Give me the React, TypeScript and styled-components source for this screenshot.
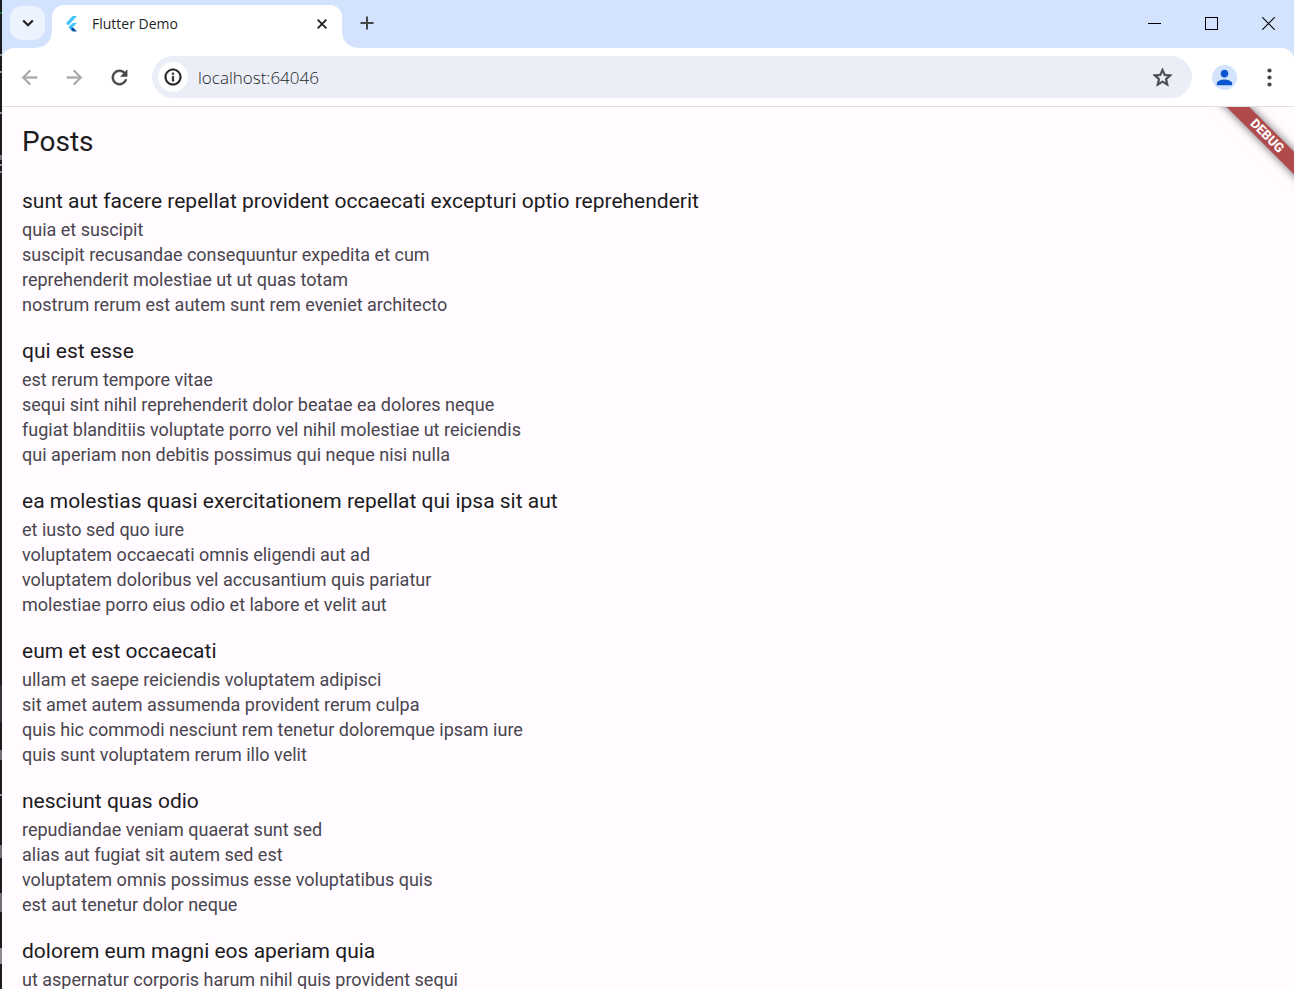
import React from "react";
import styled, { createGlobalStyle } from "styled-components";

const GlobalStyle = createGlobalStyle`
  *, *::before, *::after { box-sizing: border-box; }
  html, body, #root { height: 100%; margin: 0; }
  body { overflow: hidden; background: #1b1c1e; }
  button, input { font: inherit; color: inherit; border: 0; padding: 0; margin: 0; background: none; }
  h1, h2, p { margin: 0; font-weight: 400; }
`;

const uiFont = `"Open Sans", "Noto Sans", sans-serif`;

const Desktop = styled.div`
  height: 100%;
  display: flex;
  background: #1b1c1e;
`;

const EditorEdge = styled.div`
  flex: 0 0 2px;
  background: linear-gradient(
    #1b1c1e 12px, #1f6b35 12px 14px, #1b1c1e 14px 54px, #8a8c90 54px 56px, #1b1c1e 56px 71px,
    #8a8c90 71px 73px, #1b1c1e 73px 112px, #8a8c90 112px 114px, #1b1c1e 114px 155px,
    #6d6f73 155px 160px, #1b1c1e 160px 164px, #8a8c90 164px 166px, #1b1c1e 166px 171px,
    #8a8c90 171px 173px, #1b1c1e 173px 685px, #34353c 685px 722px, #1b1c1e 722px 750px,
    #6d6f73 750px 760px, #1b1c1e 760px 794px, #8a8c90 794px 796px, #1b1c1e 796px 845px,
    #6d6f73 845px 858px, #1b1c1e 858px 893px, #6d6f73 893px 912px, #1b1c1e 912px 948px,
    #8a8c90 948px 964px, #1b1c1e 964px
  );
`;

const BrowserWindow = styled.div`
  flex: 1;
  min-width: 0;
  display: flex;
  flex-direction: column;
  background: #d3e2fd;
  font-family: ${uiFont};
`;

const TabStrip = styled.header`
  flex: 0 0 48px;
  display: flex;
  align-items: flex-start;
  padding-left: 8px;
`;

const TabSearchButton = styled.button`
  width: 35px;
  height: 34px;
  margin-top: 6px;
  border-radius: 12px;
  background: #ecf2fe;
  display: grid;
  place-items: center;
`;

const Tab = styled.div`
  position: relative;
  width: 290px;
  height: 43px;
  margin: 5px 0 0 7px;
  padding: 0 10px 6px 12px;
  border-radius: 12px 12px 0 0;
  background: #fff;
  display: flex;
  align-items: center;

  &::before,
  &::after {
    content: "";
    position: absolute;
    bottom: 0;
    width: 15px;
    height: 15px;
  }
  &::before {
    right: 100%;
    background: radial-gradient(circle at 0 0, transparent 14px, #fff 15px);
  }
  &::after {
    left: 100%;
    background: radial-gradient(circle at 100% 0, transparent 14px, #fff 15px);
  }
`;

const TabTitle = styled.span`
  flex: 1;
  margin-left: 12px;
  font-size: 14px;
  line-height: 20px;
  color: #1f1f1f;
`;

const SmallButton = styled.button`
  width: 20px;
  height: 20px;
  display: grid;
  place-items: center;
`;

const NewTabButton = styled.button`
  width: 30px;
  height: 30px;
  margin: 8px 0 0 10px;
  display: grid;
  place-items: center;
`;

const WindowControls = styled.div`
  margin-left: auto;
  display: flex;
  gap: 5px;
`;

const WindowButton = styled.button`
  width: 52px;
  height: 47px;
  display: grid;
  place-items: center;
`;

const Toolbar = styled.nav`
  flex: 0 0 59px;
  display: flex;
  align-items: center;
  padding: 0 16px 0 10px;
  border-radius: 12px 12px 0 0;
  border-bottom: 1px solid #dfdfe1;
  background: #fff;
`;

const NavButton = styled.button`
  width: 35px;
  height: 35px;
  margin-right: 10px;
  display: grid;
  place-items: center;
`;

const AddressBar = styled.div`
  flex: 1;
  min-width: 0;
  height: 42px;
  margin-left: 5px;
  padding: 0 18px 0 6px;
  border-radius: 21px;
  background: #ebeef7;
  display: flex;
  align-items: center;
`;

const SiteInfoButton = styled.button`
  width: 30px;
  height: 30px;
  border-radius: 50%;
  background: #fff;
  display: grid;
  place-items: center;
`;

const AddressInput = styled.input`
  flex: 1;
  min-width: 0;
  height: 30px;
  margin-left: 10px;
  outline: 0;
  font-size: 17px;
  font-weight: 350;
  color: #1f1f1f;
`;

const StarButton = styled.button`
  width: 24px;
  height: 24px;
  display: grid;
  place-items: center;
`;

const ProfileButton = styled.button`
  width: 25px;
  height: 25px;
  margin: 0 24px 0 20px;
  border-radius: 50%;
  background: #d3e3fd;
  display: grid;
  place-items: center;
`;

const MenuButton = styled.button`
  width: 17px;
  height: 30px;
  display: grid;
  place-items: center;
`;

const Page = styled.main`
  position: relative;
  flex: 1;
  min-height: 0;
  overflow: hidden;
  background: #fffbff;
  font-family: Roboto, sans-serif;
`;

const AppBar = styled.div`
  height: 69px;
  padding: 0 20px;
  display: flex;
  align-items: center;
`;

const AppTitle = styled.h1`
  font-size: 28px;
  line-height: 35px;
  color: #1c1b1e;
`;

const PostList = styled.div`
  display: flex;
  flex-direction: column;
  gap: 19px;
  padding: 10px 20px;
`;

const Post = styled.article`
  display: flex;
  flex-direction: column;
  gap: 1px;
`;

const PostTitle = styled.h2`
  font-size: 21px;
  line-height: 30px;
  color: #1c1b1e;
`;

const PostBody = styled.p`
  font-size: 18px;
  line-height: 25px;
  color: #49454e;
  white-space: pre-line;
`;

const DebugBanner = styled.div`
  position: absolute;
  top: 21px;
  right: -53px;
  width: 160px;
  height: 16px;
  transform: rotate(45deg);
  background: #b04a4d;
  box-shadow: 0 0 10px rgba(0, 0, 0, 0.6);
  color: #fff;
  font-size: 13px;
  font-weight: 800;
  line-height: 16px;
  text-align: center;
`;

const posts = [
  {
    title: "sunt aut facere repellat provident occaecati excepturi optio reprehenderit",
    body: "quia et suscipit\nsuscipit recusandae consequuntur expedita et cum\nreprehenderit molestiae ut ut quas totam\nnostrum rerum est autem sunt rem eveniet architecto",
  },
  {
    title: "qui est esse",
    body: "est rerum tempore vitae\nsequi sint nihil reprehenderit dolor beatae ea dolores neque\nfugiat blanditiis voluptate porro vel nihil molestiae ut reiciendis\nqui aperiam non debitis possimus qui neque nisi nulla",
  },
  {
    title: "ea molestias quasi exercitationem repellat qui ipsa sit aut",
    body: "et iusto sed quo iure\nvoluptatem occaecati omnis eligendi aut ad\nvoluptatem doloribus vel accusantium quis pariatur\nmolestiae porro eius odio et labore et velit aut",
  },
  {
    title: "eum et est occaecati",
    body: "ullam et saepe reiciendis voluptatem adipisci\nsit amet autem assumenda provident rerum culpa\nquis hic commodi nesciunt rem tenetur doloremque ipsam iure\nquis sunt voluptatem rerum illo velit",
  },
  {
    title: "nesciunt quas odio",
    body: "repudiandae veniam quaerat sunt sed\nalias aut fugiat sit autem sed est\nvoluptatem omnis possimus esse voluptatibus quis\nest aut tenetur dolor neque",
  },
  {
    title: "dolorem eum magni eos aperiam quia",
    body: "ut aspernatur corporis harum nihil quis provident sequi",
  },
];

type GlyphProps = { d: string; size: number; color: string; outline?: number };

const Glyph = ({ d, size, color, outline = 0 }: GlyphProps) => (
  <svg
    width={size}
    height={size}
    viewBox="0 0 24 24"
    fill={color}
    stroke={outline ? color : "none"}
    strokeWidth={outline}
    aria-hidden="true"
  >
    <path d={d} />
  </svg>
);

const glyphs = {
  back: "M20 11H7.83l5.59-5.59L12 4l-8 8 8 8 1.41-1.41L7.83 13H20v-2z",
  forward: "M12 4l-1.41 1.41L16.17 11H4v2h12.17l-5.58 5.59L12 20l8-8z",
  reload:
    "M17.65 6.35C16.2 4.9 14.21 4 12 4c-4.42 0-7.99 3.58-7.99 8s3.57 8 7.99 8c3.73 0 6.84-2.55 7.73-6h-2.08c-.82 2.33-3.04 4-5.65 4-3.31 0-6-2.69-6-6s2.69-6 6-6c1.66 0 3.14.69 4.22 1.78L13 11h7V4l-2.35 2.35z",
  info: "M11 7h2v2h-2zm0 4h2v6h-2zm1-9C6.48 2 2 6.48 2 12s4.48 10 10 10 10-4.48 10-10S17.52 2 12 2zm0 18c-4.41 0-8-3.59-8-8s3.59-8 8-8 8 3.59 8 8-3.59 8-8 8z",
  star: "M22 9.24l-7.19-.62L12 2 9.19 8.63 2 9.24l5.46 4.73L5.82 21 12 17.27 18.18 21l-1.63-7.03L22 9.24zM12 15.4l-3.76 2.27 1-4.28-3.32-2.88 4.38-.38L12 6.1l1.71 4.04 4.38.38-3.32 2.88 1 4.28L12 15.4z",
  person:
    "M12 12c2.21 0 4-1.79 4-4s-1.79-4-4-4-4 1.79-4 4 1.79 4 4 4zm0 2c-2.67 0-8 1.34-8 4v2h16v-2c0-2.66-5.33-4-8-4z",
};

const FlutterLogo = () => (
  <svg width="16" height="16" viewBox="0 0 16 16" aria-hidden="true">
    <path d="M8.500 0H13L4.300 9.500 2 7.200z" fill="#47c5fb" />
    <path d="M8.800 7H13L8.800 11.200 6.600 9.100z" fill="#47c5fb" />
    <path d="M4.600 11.200l2.100-2.200 2.200 2.200-2.200 2.200z" fill="#22b4f5" />
    <path d="M6.700 13.400l2.200-2.200L13 15.500H8.800z" fill="#0a4fa0" />
  </svg>
);

export default function App() {
  return (
    <Desktop>
      <GlobalStyle />
      <EditorEdge />
      <BrowserWindow>
        <TabStrip>
          <TabSearchButton aria-label="Search tabs">
            <svg width="12" height="8" viewBox="0 0 12 8" fill="none" stroke="#1f1f1f" strokeWidth="2.2" aria-hidden="true">
              <path d="M1.200 1.500L6 6.200l4.800-4.700" />
            </svg>
          </TabSearchButton>
          <Tab>
            <FlutterLogo />
            <TabTitle>Flutter Demo</TabTitle>
            <SmallButton aria-label="Close tab">
              <svg width="10" height="10" viewBox="0 0 10 10" stroke="#1f1f1f" strokeWidth="1.8" aria-hidden="true">
                <path d="M.6.6l8.800 8.800M9.400.6L.6 9.400" />
              </svg>
            </SmallButton>
          </Tab>
          <NewTabButton aria-label="New tab">
            <svg width="14" height="14" viewBox="0 0 14 14" stroke="#444648" strokeWidth="2" aria-hidden="true">
              <path d="M7 .5v13M.5 7h13" />
            </svg>
          </NewTabButton>
          <WindowControls>
            <WindowButton aria-label="Minimize">
              <svg width="13" height="13" viewBox="0 0 13 13" stroke="#000" aria-hidden="true">
                <path d="M0 6.500h13" />
              </svg>
            </WindowButton>
            <WindowButton aria-label="Maximize">
              <svg width="13" height="13" viewBox="0 0 13 13" stroke="#000" fill="none" aria-hidden="true">
                <rect x=".5" y=".5" width="12" height="12" />
              </svg>
            </WindowButton>
            <WindowButton aria-label="Close">
              <svg width="13" height="13" viewBox="0 0 13 13" stroke="#000" strokeWidth="1.1" aria-hidden="true">
                <path d="M.2.2l12.600 12.600M12.800.2L.2 12.800" />
              </svg>
            </WindowButton>
          </WindowControls>
        </TabStrip>
        <Toolbar>
          <NavButton aria-label="Back">
            <Glyph d={glyphs.back} size={23} color="#a9a9a9" outline={0.3} />
          </NavButton>
          <NavButton aria-label="Forward">
            <Glyph d={glyphs.forward} size={23} color="#a9a9a9" outline={0.3} />
          </NavButton>
          <NavButton aria-label="Reload">
            <Glyph d={glyphs.reload} size={23} color="#444648" outline={0.5} />
          </NavButton>
          <AddressBar>
            <SiteInfoButton aria-label="Site information">
              <Glyph d={glyphs.info} size={20} color="#1f1f1f" outline={0.5} />
            </SiteInfoButton>
            <AddressInput type="text" aria-label="Address" defaultValue="localhost:64046" />
            <StarButton aria-label="Bookmark this page">
              <Glyph d={glyphs.star} size={23} color="#444648" outline={0.6} />
            </StarButton>
          </AddressBar>
          <ProfileButton aria-label="Profile">
            <Glyph d={glyphs.person} size={23} color="#0b57d0" />
          </ProfileButton>
          <MenuButton aria-label="Menu">
            <svg width="5" height="19" viewBox="0 0 5 19" fill="#444648" aria-hidden="true">
              <circle cx="2.5" cy="2.5" r="2.1" />
              <circle cx="2.5" cy="9.5" r="2.1" />
              <circle cx="2.5" cy="16.500" r="2.1" />
            </svg>
          </MenuButton>
        </Toolbar>
        <Page>
          <AppBar>
            <AppTitle>Posts</AppTitle>
          </AppBar>
          <PostList>
            {posts.map((post) => (
              <Post key={post.title}>
                <PostTitle>{post.title}</PostTitle>
                <PostBody>{post.body}</PostBody>
              </Post>
            ))}
          </PostList>
          <DebugBanner>DEBUG</DebugBanner>
        </Page>
      </BrowserWindow>
    </Desktop>
  );
}
